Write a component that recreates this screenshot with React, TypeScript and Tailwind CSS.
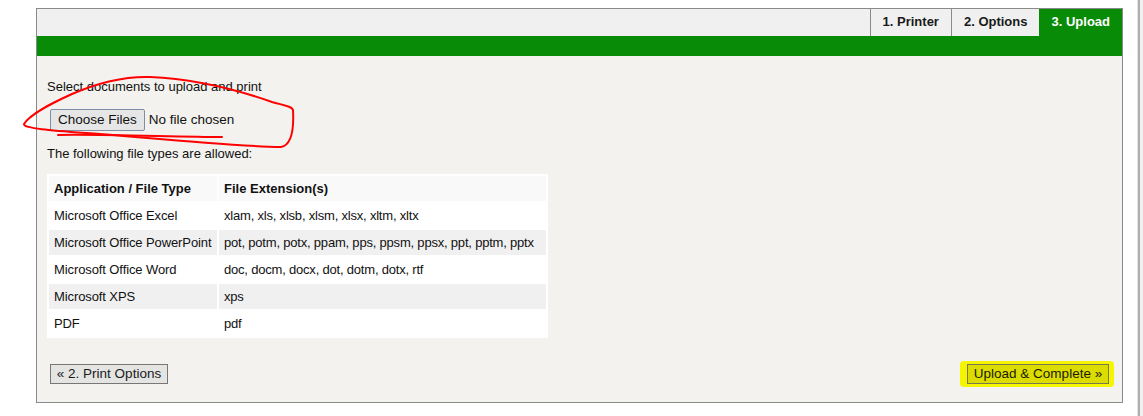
import React from 'react';

const rows = [
  { app: 'Microsoft Office Excel', ext: 'xlam, xls, xlsb, xlsm, xlsx, xltm, xltx' },
  { app: 'Microsoft Office PowerPoint', ext: 'pot, potm, potx, ppam, pps, ppsm, ppsx, ppt, pptm, pptx' },
  { app: 'Microsoft Office Word', ext: 'doc, docm, docx, dot, dotm, dotx, rtf' },
  { app: 'Microsoft XPS', ext: 'xps' },
  { app: 'PDF', ext: 'pdf' },
];

function Tab({ label, active }: { label: string; active?: boolean }) {
  return (
    <div
      className={
        active
          ? 'h-full px-3 pb-[2px] flex items-center bg-[#088c08] text-white font-bold'
          : 'h-full px-3 pb-[2px] flex items-center border-l border-[#8a8a8a] text-[#1a1a1a] font-bold'
      }
    >
      {label}
    </div>
  );
}

// freehand pen marks drawn over the screenshot
function Annotations() {
  return (
    <svg className="absolute left-0 top-0 pointer-events-none" width="1143" height="416">
      <path
        d="M 150 77 C 120 76, 95 84, 72 94 C 50 104, 30 114, 24 124 C 23 129, 60 131, 100 134 C 160 139, 230 146, 281 147 C 292 145, 294 128, 293 110 C 292 106, 282 105, 272 102 C 235 89, 195 79, 150 77"
        fill="none"
        stroke="#ff0000"
        strokeWidth="2"
        strokeLinecap="round"
      />
      <path d="M 58 135 C 100 134, 180 137, 222 137" fill="none" stroke="#ff0000" strokeWidth="2" strokeLinecap="round" />
    </svg>
  );
}

export default function App() {
  return (
    <div className="relative w-[1143px] h-[416px] bg-white flex text-[13px] text-[#111]" style={{ fontFamily: '"Liberation Sans", Arial, sans-serif' }}>
      <div className="w-[1137px] pl-[36px] pt-[8px]">
        <div className="w-[1087px] h-[395px] border border-[#8a8a8a] flex flex-col bg-[#f3f2ee]">
          {/* header with step tabs */}
          <div className="h-[27px] bg-[#f0f0f0] flex justify-end">
            <Tab label="1. Printer" />
            <Tab label="2. Options" />
            <Tab label="3. Upload" active />
          </div>
          <div className="h-[20px] bg-[#088c08]" />

          <div className="flex-1 flex flex-col pl-[10px] pt-[23px]">
            <div className="leading-[15px]">Select documents to upload and print</div>

            <div className="flex items-center mt-[15px] ml-[3px] h-[22px]">
              <button className="h-[22px] px-[7px] border border-[#7f8ea8] bg-[#e6e6e6] rounded-[2px] text-[13.5px] text-[#111] leading-none">
                Choose Files
              </button>
              <span className="ml-[4px] text-[13.5px]">No file chosen</span>
            </div>

            <div className="mt-[15px] leading-[15px]">The following file types are allowed:</div>

            <table className="mt-[13px] w-[501px] table-fixed bg-white border-separate border-spacing-[2px] whitespace-nowrap">
              <thead>
                <tr className="h-[25px]">
                  <th className="w-[168px] bg-[#f9f9f9] text-left font-bold px-[5px] py-0">Application / File Type</th>
                  <th className="bg-[#f9f9f9] text-left font-bold px-[5px] py-0">File Extension(s)</th>
                </tr>
              </thead>
              <tbody>
                {rows.map((r, i) => (
                  <tr key={r.app} className={i % 2 === 1 ? 'h-[25px] bg-[#f0f0f0]' : 'h-[25px] bg-white'}>
                    <td className="px-[5px] py-0 overflow-hidden tracking-[-0.1px]">{r.app}</td>
                    <td className="px-[5px] py-0 overflow-hidden tracking-[-0.2px]">{r.ext}</td>
                  </tr>
                ))}
              </tbody>
            </table>

            <div className="flex justify-between items-center mt-[26px] pl-[3px] pr-[13px]">
              <button className="h-[20px] w-[118px] border border-[#777] bg-[#e4e4e2] text-[13.5px] text-[#1a1a1a] leading-none">
                « 2. Print Options
              </button>
              <span className="relative">
                <span className="absolute -left-[7px] -right-[5px] -top-[3px] -bottom-[3px] bg-[#f5f500] rounded-[4px]" />
                <button className="relative h-[20px] w-[142px] border border-[#777750] bg-[#dcdc00] text-[13.5px] text-[#1a1a00] leading-none">
                  Upload &amp; Complete »
                </button>
              </span>
            </div>
          </div>
        </div>
      </div>

      {/* window edge */}
      <div className="flex-1 flex">
        <div className="w-px bg-[#e2e2e2]" />
        <div className="w-[2px] bg-[#b0b0b0]" />
        <div className="flex-1 bg-[#f0f0f0]" />
      </div>

      <Annotations />
    </div>
  );
}
